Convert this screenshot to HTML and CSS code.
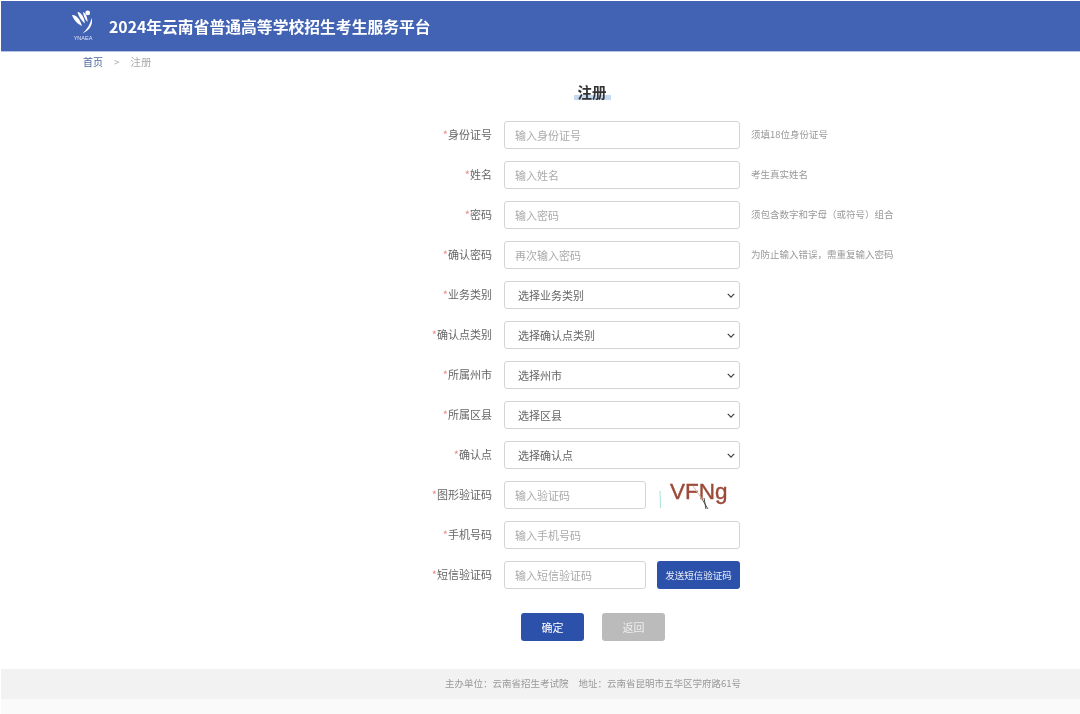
FILE: index.html
```html
<!DOCTYPE html>
<html lang="zh-CN">

<head>
  <meta charset="UTF-8" />
  <meta name="viewport" content="width=device-width, initial-scale=1.0" />
  <title>注册</title>
  <link rel="stylesheet" href="styles.css">
</head>

<body>
  <header class="top-bar">
    <div class="logo">
      <svg width="24" height="25" viewBox="0 0 24 25" aria-hidden="true">
        <circle cx="16.7" cy="2.9" r="2.4" fill="#fff" />
        <path d="M1 5C5 4.5 9 9 11 16C7 14.5 2.5 10 1 5Z" fill="#fff" />
        <path d="M6.5 2C10.5 2.5 13 7 14 13.5C10.5 11 7.5 6.5 6.5 2Z" fill="#fff" />
        <path d="M12 2C14.5 3 16.5 7 16.5 12C14 9.5 12.5 6 12 2Z" fill="#fff" />
        <path d="M20.5 8C22.5 14 19 20 11.5 23.5C16.5 19 19.5 14 20.5 8Z" fill="#fff" />
      </svg>
      <span class="logo-name">YNAEA</span>
    </div>
    <h1 class="site-title">2024年云南省普通高等学校招生考生服务平台</h1>
  </header>

  <nav class="crumbs">
    <a class="crumb-home" href="#">首页</a>
    <span class="crumb-sep">&gt;</span>
    <span class="crumb-now">注册</span>
  </nav>

  <h2 class="page-title"><span>注册</span></h2>

  <form class="reg-form">
    <div class="row">
      <label><i>*</i>身份证号</label>
      <input type="text" placeholder="输入身份证号" />
      <p class="hint">须填18位身份证号</p>
    </div>
    <div class="row">
      <label><i>*</i>姓名</label>
      <input type="text" placeholder="输入姓名" />
      <p class="hint">考生真实姓名</p>
    </div>
    <div class="row">
      <label><i>*</i>密码</label>
      <input type="text" placeholder="输入密码" />
      <p class="hint">须包含数字和字母（或符号）组合</p>
    </div>
    <div class="row">
      <label><i>*</i>确认密码</label>
      <input type="text" placeholder="再次输入密码" />
      <p class="hint">为防止输入错误，需重复输入密码</p>
    </div>
    <div class="row">
      <label><i>*</i>业务类别</label>
      <select><option>选择业务类别</option></select>
    </div>
    <div class="row">
      <label><i>*</i>确认点类别</label>
      <select><option>选择确认点类别</option></select>
    </div>
    <div class="row">
      <label><i>*</i>所属州市</label>
      <select><option>选择州市</option></select>
    </div>
    <div class="row">
      <label><i>*</i>所属区县</label>
      <select><option>选择区县</option></select>
    </div>
    <div class="row">
      <label><i>*</i>确认点</label>
      <select><option>选择确认点</option></select>
    </div>
    <div class="row">
      <label><i>*</i>图形验证码</label>
      <div class="split">
        <input type="text" placeholder="输入验证码" />
        <div class="captcha">
          <span>VFNg</span>
          <svg class="captcha-lines" width="83" height="34" viewBox="0 0 83 34" aria-hidden="true">
            <path d="M3 13L3.5 30" stroke="#a6e0d8" stroke-width="1" fill="none" />
            <path d="M36 8L45 21" stroke="#d9b8a6" stroke-width="1" fill="none" />
            <path d="M45 21L51 31" stroke="#6d5a50" stroke-width="1" fill="none" />
            <path d="M47 20L49 31" stroke="#444" stroke-width="1" fill="none" />
          </svg>
        </div>
      </div>
    </div>
    <div class="row">
      <label><i>*</i>手机号码</label>
      <input type="text" placeholder="输入手机号码" />
    </div>
    <div class="row">
      <label><i>*</i>短信验证码</label>
      <div class="split">
        <input type="text" placeholder="输入短信验证码" />
        <button type="button" class="btn-sms">发送短信验证码</button>
      </div>
    </div>

    <div class="actions">
      <button type="button" class="btn btn-ok">确定</button>
      <button type="button" class="btn btn-back">返回</button>
    </div>
  </form>

  <footer class="foot">
    <div class="foot-info">
      <span>主办单位：云南省招生考试院</span>
      <span>地址：云南省昆明市五华区学府路61号</span>
    </div>
    <div class="foot-strip"></div>
  </footer>
</body>

</html>
```

FILE: styles.css
```css
* {
  box-sizing: border-box;
}

html,
body {
  margin: 0;
  padding: 0;
}

body {
  background-color: #fff;
  color: #666;
  font-family: "Noto Sans CJK SC", "Noto Sans", sans-serif;
  font-size: 11px;
  overflow: hidden;
  filter: blur(0.45px);
}

.top-bar {
  display: flex;
  align-items: center;
  height: 51px;
  margin: 1px 0 0 1px;
  padding-left: 69px;
  background-color: #4263b3;
  border-bottom: 1px solid #b4c4e4;
}

.logo {
  display: flex;
  flex-direction: column;
  align-items: center;
  width: 26px;
}

.logo svg {
  display: block;
}

.logo-name {
  color: #dfe6f5;
  font-family: "Liberation Sans", sans-serif;
  font-size: 5.5px;
  line-height: 7px;
}

.site-title {
  margin: 2px 0 0 13px;
  color: #fff;
  font-size: 15.8px;
  font-weight: 700;
  line-height: 24px;
}

.crumbs {
  display: flex;
  align-items: center;
  height: 19px;
  padding-left: 83px;
  color: #aaa;
  font-size: 10px;
}

.crumb-home {
  color: #4f6a9c;
  text-decoration: none;
}

.crumb-sep {
  margin: 0 11px;
}

.crumb-now {
  font-size: 10.5px;
}

.page-title {
  margin: 7px 0 14px;
  height: 29px;
  color: #333;
  font-size: 14.5px;
  font-weight: 700;
  line-height: 28px;
  text-align: center;
  padding-left: 104px;
}

.page-title span {
  display: inline-block;
  padding: 0 4px;
  background: linear-gradient(#fff 65%, #c5d9f3 65%, #c5d9f3 88%, #fff 88%);
  line-height: 20px;
}

.reg-form {
  display: flex;
  flex-direction: column;
  gap: 12px;
  padding-left: 400px;
}

.row {
  display: grid;
  grid-template-columns: 92px 236px auto;
  column-gap: 12px;
  align-items: center;
  height: 28px;
}

.row label {
  text-align: right;
  line-height: 26px;
  align-self: start;
}

.row i {
  color: #ea8a8a;
  font-style: normal;
}

.row input,
.row select {
  width: 100%;
  height: 28px;
  border: 1px solid #d4d4d4;
  border-radius: 3px;
  background-color: #fff;
  color: #666;
  font-family: inherit;
  font-size: 11px;
}

.row input {
  padding: 0 10px;
}

.row input::placeholder {
  color: #aaa;
}

.row select {
  padding-left: 13px;
  appearance: none;
  background-image: url("data:image/svg+xml,%3Csvg xmlns='http://www.w3.org/2000/svg' viewBox='0 0 10 6'%3E%3Cpath d='M1 1l4 4 4-4' fill='none' stroke='%23444' stroke-width='1.6'/%3E%3C/svg%3E");
  background-repeat: no-repeat;
  background-position: right 4px center;
  background-size: 8px 5px;
}

.hint {
  margin: 0 0 3px -1px;
  color: #999;
  font-size: 9.5px;
}

.split {
  display: flex;
  justify-content: space-between;
  align-items: center;
}

.split input {
  width: 142px;
}

.captcha {
  position: relative;
  width: 83px;
  height: 28px;
  margin-top: -6px;
  padding-left: 13px;
  color: #9c4a38;
  font-family: "Liberation Sans", sans-serif;
  font-size: 22.5px;
  line-height: 28px;
  white-space: nowrap;
  -webkit-text-stroke: 0.4px #9c4a38;
}

.captcha-lines {
  position: absolute;
  left: 0;
  top: 0;
}

.btn-sms {
  width: 83px;
  height: 28px;
  padding: 0;
  border: 0;
  border-radius: 3px;
  background-color: #2c51ab;
  color: #e8edf8;
  font-family: inherit;
  font-size: 9.5px;
}

.actions {
  display: flex;
  gap: 18px;
  margin-top: 12px;
  padding-left: 121px;
}

.btn {
  width: 63px;
  height: 28px;
  padding: 0;
  border: 0;
  border-radius: 3px;
  font-family: inherit;
  font-size: 11px;
}

.btn-ok {
  background-color: #2c51ab;
  color: #fff;
}

.btn-back {
  background-color: #bbb;
  color: #eee;
}

.foot {
  margin: 28px 0 0 1px;
}

.foot-info {
  display: flex;
  justify-content: center;
  gap: 10px;
  height: 30px;
  padding-left: 105px;
  background-color: #f2f2f2;
  color: #999;
  font-size: 9.5px;
  line-height: 29px;
}

.foot-strip {
  height: 15px;
  background-color: #fafafa;
}
```
